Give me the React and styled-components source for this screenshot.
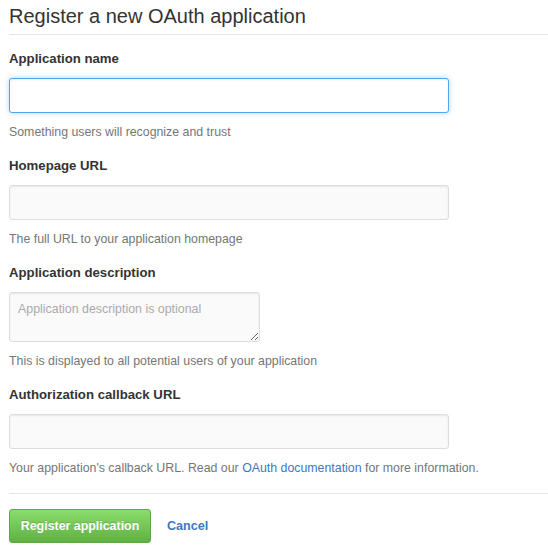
import React from 'react';
import styled, { createGlobalStyle } from 'styled-components';

const GlobalStyle = createGlobalStyle`
    html, body {
        margin: 0;
        padding: 0;
        background: #fff;
    }
    body {
        font-family: 'Liberation Sans', Arial, Helvetica, sans-serif;
        color: #333;
    }
`;

const Page = styled.div`
    padding: 0 0 0 9px;
`;

const Subhead = styled.h2`
    margin: 0 0 14px;
    padding: 4px 0 6px;
    font-size: 20px;
    line-height: 24px;
    font-weight: normal;
    color: #333;
    border-bottom: 1px solid #e5e5e5;
`;

const Group = styled.dl`
    margin: 0 0 14px;
`;

const Label = styled.dt`
    font-size: 13.2px;
    font-weight: bold;
    line-height: 20px;
    margin: 0 0 9px;
`;

const Field = styled.dd`
    margin: 0;
`;

const TextInput = styled.input`
    display: block;
    box-sizing: border-box;
    width: 440px;
    height: 35px;
    padding: 7px 8px;
    font-size: 13px;
    font-family: inherit;
    color: #333;
    border-radius: 3px;
    outline: none;
    border: 1px solid ${({ focused }) => (focused ? '#51a7e8' : '#ddd')};
    background: ${({ focused }) => (focused ? '#fff' : '#fafafa')};
    box-shadow: ${({ focused }) =>
        focused
            ? 'inset 0 1px 2px rgba(0,0,0,0.075), 0 0 5px rgba(81,167,232,0.5)'
            : 'inset 0 1px 2px rgba(0,0,0,0.075)'};
`;

const TextArea = styled.textarea`
    display: block;
    box-sizing: border-box;
    width: 251px;
    height: 50px;
    padding: 7px 8px;
    font-size: 12.4px;
    line-height: 18px;
    font-family: inherit;
    color: #333;
    border: 1px solid #ddd;
    border-radius: 3px;
    background: #fafafa;
    box-shadow: inset 0 1px 2px rgba(0, 0, 0, 0.075);
    outline: none;
    resize: both;

    &::placeholder {
        color: #aaa;
    }
`;

const Note = styled.p`
    margin: 9px 0 0;
    font-size: 12.35px;
    line-height: 20px;
    color: #767676;
`;

const Link = styled.a`
    color: #4078c0;
    text-decoration: none;
`;

const Divider = styled.hr`
    height: 0;
    margin: 15px 0 15px;
    border: 0;
    border-top: 1px solid #e5e5e5;
`;

const Actions = styled.div`
    display: flex;
    align-items: center;
    gap: 16px;
`;

const PrimaryButton = styled.button`
    box-sizing: border-box;
    height: 34px;
    width: 142px;
    padding: 0;
    white-space: nowrap;
    font-family: inherit;
    font-size: 12.4px;
    font-weight: bold;
    color: #fff;
    text-shadow: 0 -1px 0 rgba(0, 0, 0, 0.15);
    background: linear-gradient(#8add6d, #60b044);
    border: 1px solid #5ca941;
    border-radius: 3px;
    cursor: pointer;
`;

const CancelLink = styled(Link)`
    font-size: 12.6px;
    font-weight: bold;
`;

const fields = [
    { label: 'Application name', note: 'Something users will recognize and trust', focused: true },
    { label: 'Homepage URL', note: 'The full URL to your application homepage' },
    { label: 'Application description', note: 'This is displayed to all potential users of your application', area: true },
];

export default function App() {
    return (
        <Page>
            <GlobalStyle />
            <Subhead>Register a new OAuth application</Subhead>
            {fields.map((f) => (
                <Group key={f.label}>
                    <Label>{f.label}</Label>
                    <Field>
                        {f.area ? (
                            <TextArea placeholder="Application description is optional" />
                        ) : (
                            <TextInput type="text" focused={f.focused ? 1 : 0} />
                        )}
                        <Note>{f.note}</Note>
                    </Field>
                </Group>
            ))}
            <Group>
                <Label>Authorization callback URL</Label>
                <Field>
                    <TextInput type="text" />
                    <Note>
                        Your application's callback URL. Read our <Link href="#">OAuth documentation</Link> for more
                        information.
                    </Note>
                </Field>
            </Group>
            <Divider />
            <Actions>
                <PrimaryButton>Register application</PrimaryButton>
                <CancelLink href="#">Cancel</CancelLink>
            </Actions>
        </Page>
    );
}
